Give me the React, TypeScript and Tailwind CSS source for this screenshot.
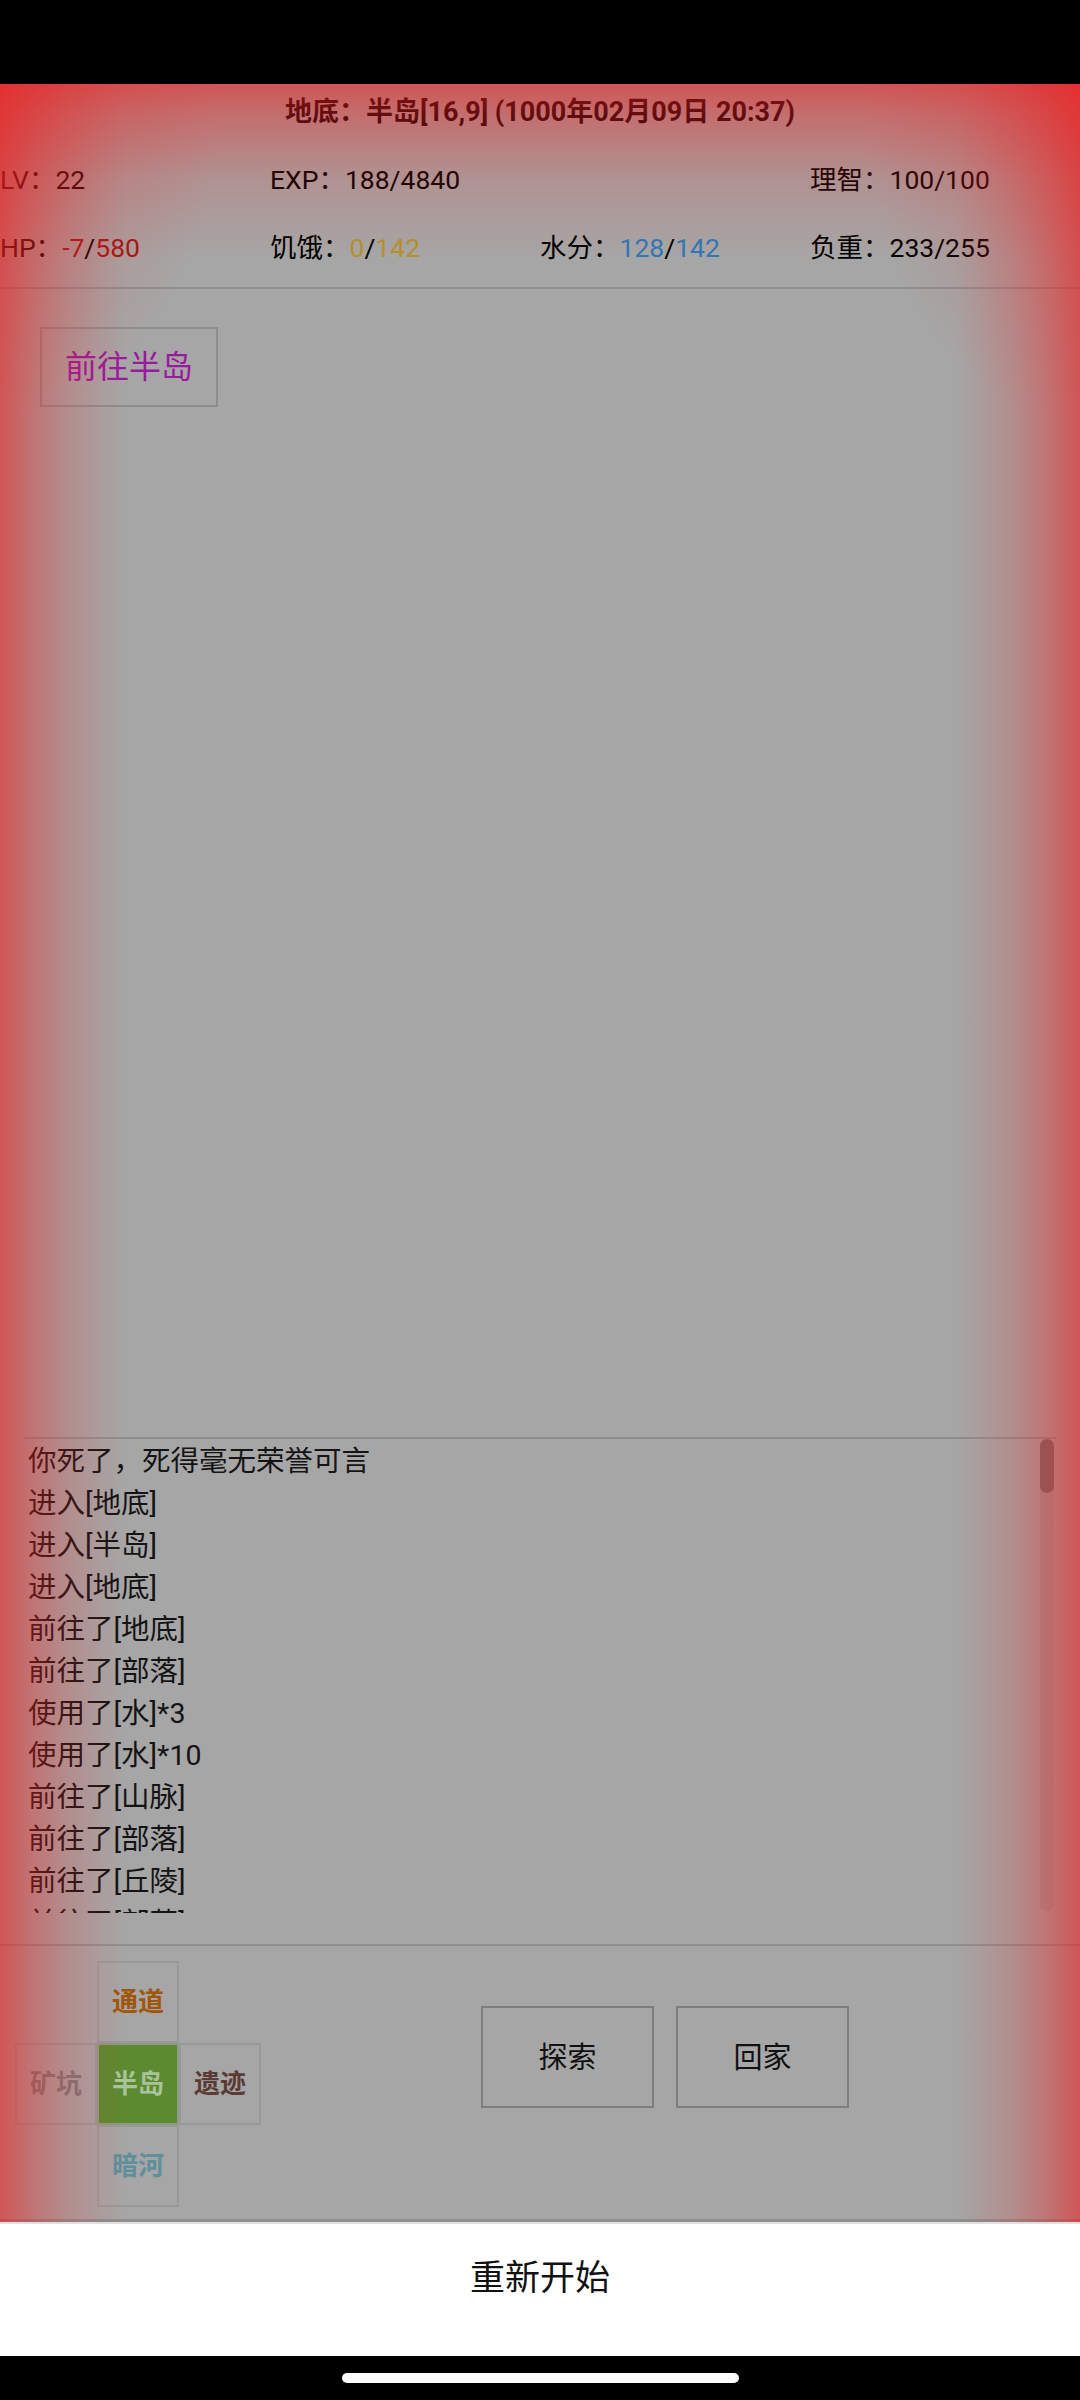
const logs = [
  '你死了，死得毫无荣誉可言',
  '进入[地底]',
  '进入[半岛]',
  '进入[地底]',
  '前往了[地底]',
  '前往了[部落]',
  '使用了[水]*3',
  '使用了[水]*10',
  '前往了[山脉]',
  '前往了[部落]',
  '前往了[丘陵]',
  '前往了[部落]',
  '前往了[地底]',
];

function Cell({ label, className }: { label: string; className: string }) {
  return (
    <div className={`flex items-center justify-center border-2 ${className}`}>{label}</div>
  );
}

export default function App() {
  return (
    <div className="w-[1080px] h-[2400px] flex flex-col bg-black font-['Roboto','Noto_Sans_CJK_SC',sans-serif] text-[#111]">
      <div className="h-[84px] bg-black" />

      <div className="relative h-[2138px] flex flex-col bg-[#a6a6a6]">
        <div className="h-[56px] flex items-center justify-center text-[27px] font-bold text-black">
          地底：半岛[16,9] (1000年02月09日 20:37)
        </div>

        <div className="grid grid-cols-4 auto-rows-[68px] items-center pt-[6px] pb-[5px] border-b-2 border-[#8f8f8f] text-[26.5px] text-black">
          <div>LV：22</div>
          <div>EXP：188/4840</div>
          <div />
          <div>理智：100/100</div>
          <div>
            HP：<span className="text-[#a31515]">-7</span>/<span className="text-[#a31515]">580</span>
          </div>
          <div>
            饥饿：<span className="text-[#b3922a]">0</span>/<span className="text-[#b3922a]">142</span>
          </div>
          <div>
            水分：<span className="text-[#2e78b6]">128</span>/<span className="text-[#2e78b6]">142</span>
          </div>
          <div>负重：233/255</div>
        </div>

        <div className="pt-[38px] pl-[40px]">
          <button className="w-[178px] h-[80px] border-2 border-[#8e8e8e] text-[32px] text-[#9a1a9e]">
            前往半岛
          </button>
        </div>

        <div className="flex-1" />

        <div className="mx-[24px] h-[476px] border-t-2 border-[#8f8f8f] flex">
          <div className="flex-1 overflow-hidden pl-[4px] pt-[2px] text-[28.5px] leading-[42px] text-[#141414]">
            {logs.map((l, i) => (
              <div key={i}>{l}</div>
            ))}
          </div>
          <div className="w-[14px] mr-[2px] mb-[2px] rounded-full bg-[#9c9c9c]">
            <div className="h-[54px] rounded-full bg-[#6e6e6e]" />
          </div>
        </div>

        <div className="mt-[31px] h-[278px] border-t-2 border-b-[3px] border-[#8f8f8f] flex items-start">
          <div className="grid grid-cols-[82px_82px_82px] grid-rows-[82px_82px_82px] ml-[15px] mt-[15px] text-[26px] font-bold">
            <div />
            <Cell label="通道" className="border-[#999] text-[#a0560a]" />
            <div />
            <Cell label="矿坑" className="border-[#999] text-[#7a7a7a]" />
            <Cell label="半岛" className="border-[#8e9a86] bg-[#5c8a30] text-[#a9c49a]" />
            <Cell label="遗迹" className="border-[#999] text-[#5b3b33]" />
            <div />
            <Cell label="暗河" className="border-[#999] text-[#5f8f9a]" />
            <div />
          </div>
          <div className="flex gap-[22px] ml-[220px] mt-[60px] text-[29px] text-[#111]">
            <button className="w-[173px] h-[102px] pt-[3px] border-2 border-[#7e7e7e]">探索</button>
            <button className="w-[173px] h-[102px] pt-[3px] border-2 border-[#7e7e7e]">回家</button>
          </div>
        </div>

        {/* damage vignette */}
        <div className="absolute inset-0 pointer-events-none bg-[linear-gradient(to_bottom,rgba(236,32,32,0.6),rgba(236,32,32,0.42)_30px,rgba(236,32,32,0.15)_95px,rgba(236,32,32,0)_175px),radial-gradient(220px_340px_at_0_0,rgba(236,32,32,0.3),rgba(236,32,32,0)),radial-gradient(220px_340px_at_100%_0,rgba(236,32,32,0.3),rgba(236,32,32,0)),linear-gradient(to_right,rgba(236,32,32,0.6),rgba(236,32,32,0.37)_33px,rgba(236,32,32,0.19)_67px,rgba(236,32,32,0.07)_100px,rgba(236,32,32,0)_125px),linear-gradient(to_left,rgba(236,32,32,0.6),rgba(236,32,32,0.37)_33px,rgba(236,32,32,0.19)_67px,rgba(236,32,32,0.07)_100px,rgba(236,32,32,0)_125px)]" />
      </div>

      <div className="h-[134px] bg-white border-t-2 border-[#e0e0e0] flex justify-center pt-[29px] text-[35px] text-[#111]">
        重新开始
      </div>

      <div className="h-[44px] bg-black flex items-center justify-center">
        <div className="w-[397px] h-[10px] rounded-full bg-white" />
      </div>
    </div>
  );
}
